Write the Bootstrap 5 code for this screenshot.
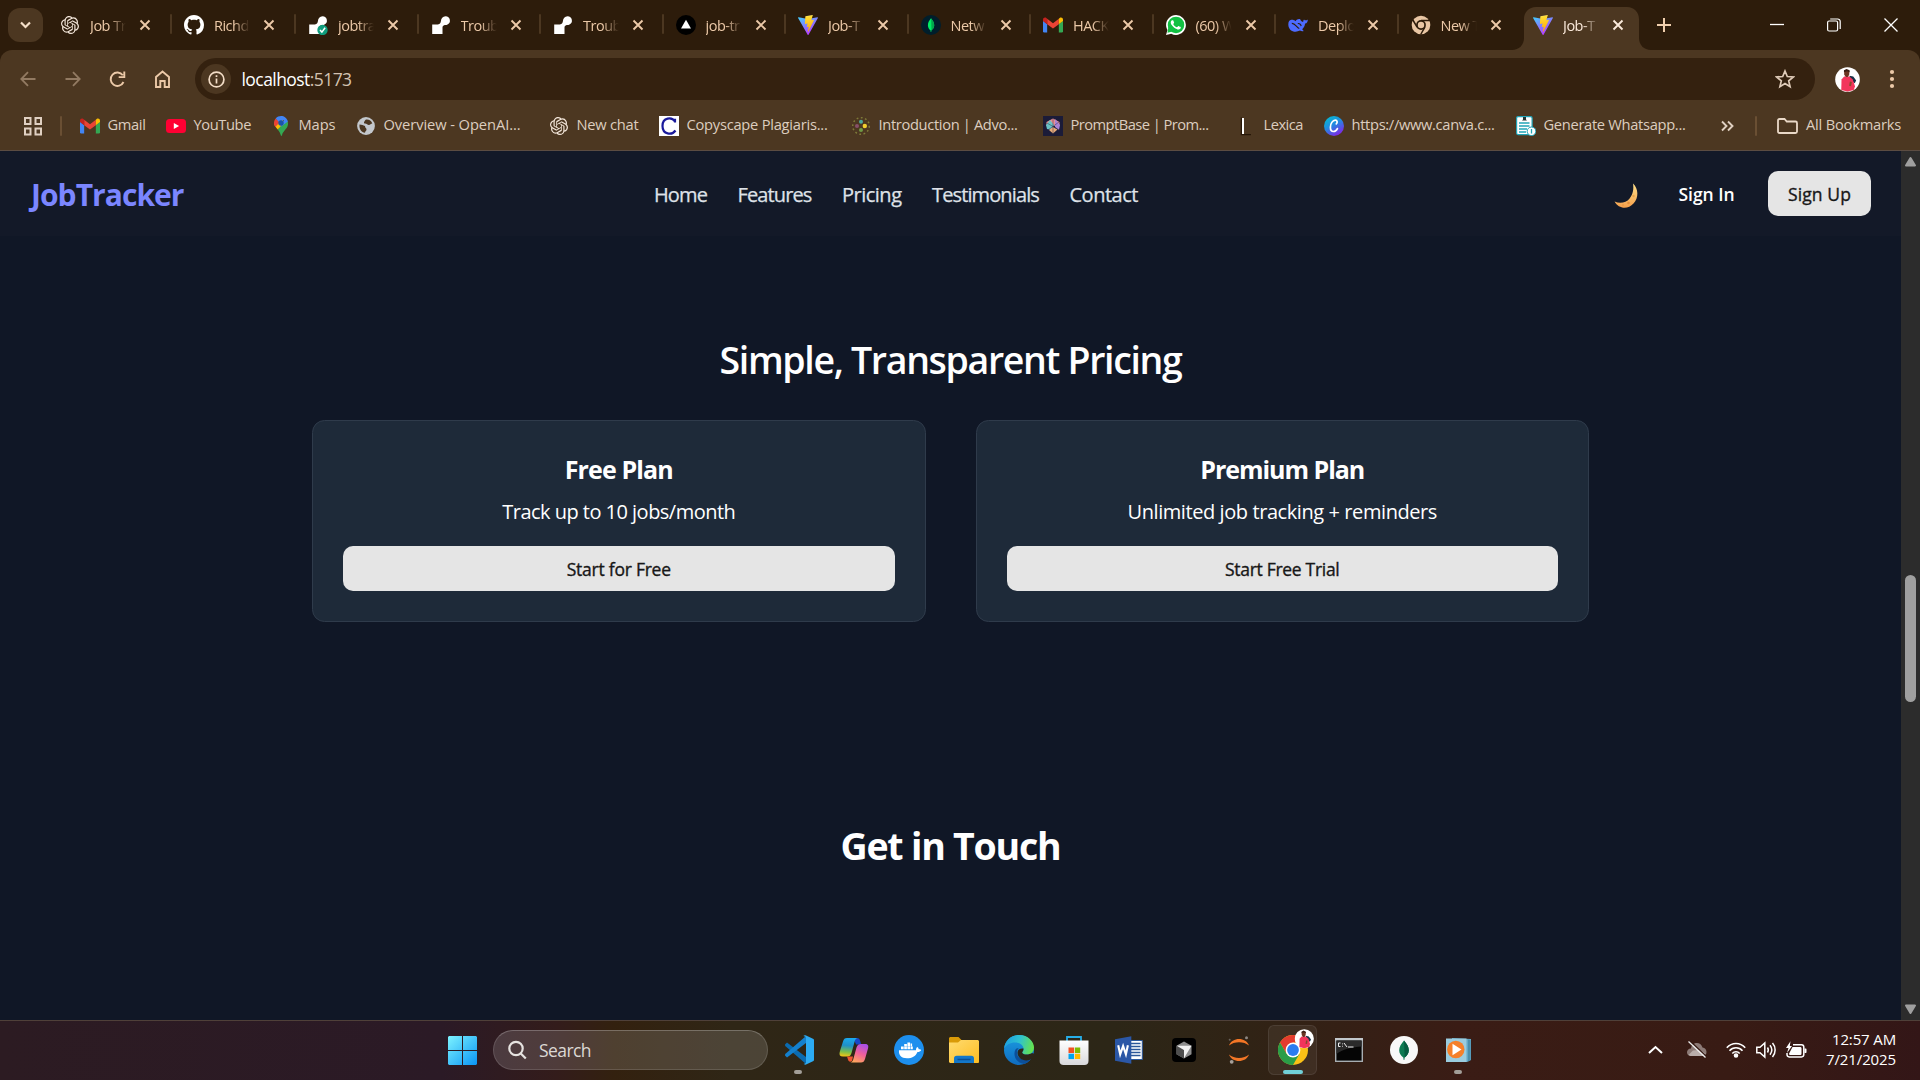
<!DOCTYPE html>
<html lang="en" data-bs-theme="dark">
<head>
<meta charset="utf-8">
<meta name="viewport" content="width=device-width, initial-scale=1">
<title>Job-Tracker</title>
<link rel="stylesheet" href="https://cdn.jsdelivr.net/npm/bootstrap@5.3.0/dist/css/bootstrap.min.css">
<style>
body{width:1920px;height:1080px;overflow:hidden;background:#101726;font-family:"Open Sans","Noto Sans",sans-serif;color:#fff}
svg{display:block;flex:none}
[data-w]{white-space:nowrap;display:inline-block}
/* tab strip */
.tabstrip{height:50px;background:#2d1c0b;color:#ecc9a8;font-size:14.5px}
.tabsearch{width:35px;height:34px;margin:8px 5px 0 8px;border-radius:12px;background:#4c3721}
.tab-item{position:relative;width:122.5px;height:50px;padding-left:12px;flex:none}
.tab-item.wide{width:124px}
.tab-item .fav{width:20px;height:20px;margin-right:10px}
.tab-item .cap{width:39px;white-space:nowrap;letter-spacing:-.5px;padding-top:1px;-webkit-mask-image:linear-gradient(90deg,#000 50%,transparent 92%)}
.tab-item .shut{margin-left:10px}
.tab-item::after{content:"";position:absolute;right:0;top:14px;width:2px;height:20px;background:#4c3721;border-radius:1px}
.tab-item:nth-child(n+13)::after{display:none}
.tab-item.current{color:#fbeadb}
.tab-item.current>*{position:relative}
.tab-item.current .tabshape{position:absolute;left:-9px;top:7px}
.plus{margin-left:13px}
.wctl{width:57px}
.tabbar-end{margin-right:1px}
/* toolbar */
.toolwrap{background:#2d1c0b}
.toolbar{height:58px;background:#4c3721;border-radius:12px 12px 0 0;padding-left:9px}
.tool{width:37px}
.tool+.tool{margin-left:8px}
.omni{width:1620px;height:42px;border-radius:21px;background:#34210f;margin-left:14px;padding-left:6px;font-size:17.5px}
.omni .star{margin-right:20px}
.site{width:30px;height:30px;background:#4c3721}
.host{margin-left:10.5px}
.port{color:#d3c2b1}
.me{margin-left:20px}
.dots{margin-left:29px}
/* bookmarks */
.marks{height:43px;background:#4c3721;border-bottom:1px solid #5b4c42;font-size:14.7px;color:#dccdbf}
.bm{flex:none;height:20px}
.bm svg{margin-right:8px}
.bm span{margin-top:-3px;margin-left:-.5px}
.divi{width:2px;height:20px;background:#6a4f33;border-radius:1px;margin:8px 18px 0}
.divi.last{margin:8px 20px 0 21px}
.w1{width:86px}.w2{width:105px}.w3{width:85px}.w4{width:193px}.w5{width:110px}.w6{width:192px}.w7{width:88px}.w8{width:205px}
/* page */
.viewport{height:869px}
.site-head{height:85px;background:#131928;padding:0 30px}
.brandname{font-size:30px;font-weight:700;color:#7b86ff;width:624px;line-height:1;padding-top:2px;padding-left:1px}
.links{font-size:20px;gap:30.5px;color:#dfe2e8;padding-top:2px;-webkit-text-stroke:.25px currentColor}
.links a{color:inherit;text-decoration:none}
.signin{font-size:17.5px;margin-left:31px;margin-right:33.5px;padding-top:1.5px}
.solid{--bs-btn-color:#171717;--bs-btn-hover-bg:#d6d6d6;--bs-btn-border-width:0;height:45px;border-radius:10px;font-size:17.5px;padding:1.5px 0 0;background:#e5e5e5;-webkit-text-stroke:.35px #171717}
.signup{width:103px}
.pricing{padding-top:98.5px}
.headline{font-size:37.5px;font-weight:600;line-height:50px}
.contact{margin-top:199px}
.plans{width:1277px;gap:50px;margin-top:35.5px}
.plan{flex:1;height:202px;border:1px solid #2f3b4b;border-radius:12.5px;background:#1e2a39;padding:31px 30px 29px}
.plan h3{font-size:25px;font-weight:700;line-height:35px;margin:0 0 10px}
.plan p{font-size:20px;line-height:30px;margin:0 0 19px}
/* scrollbar */
.sbar{width:19px;background:#2c2c2c;padding:5px 0 5px}
.thumb{width:11px;height:127px;border-radius:6px;background:#9f9f9f;margin-top:408px}
/* taskbar */
.taskbar{height:60px;border-top:1px solid #4f4039;background:linear-gradient(90deg,#2c1b22 0,#2b1a26 23%,#331c1b 29%,#33210f 32%,#2f2616 38%,#2c2617 58%,#302315 65%,#3a1c15 76%,#381b14 90%,#331617 100%);padding-bottom:1px}
.winstart{width:29px;margin-left:448px;margin-right:16px}
.findbox{width:275px;height:40px;border-radius:20px;border:1px solid rgba(255,255,255,.13);border-top-color:rgba(255,255,255,.24);background:rgba(255,255,255,.14);padding-left:14px;font-size:17.5px;color:#dcd8d4;margin-right:3px}
.app{position:relative;width:55px;height:60px;flex:none}
.app.run::after{content:"";position:absolute;bottom:6px;left:23px;width:8px;height:4px;border-radius:2px;background:#a29e98}
.app.active-app::before{content:"";position:absolute;left:2px;top:5px;width:49px;height:50px;border-radius:6px;background:rgba(255,255,255,.06);border:1px solid rgba(255,255,255,.08)}
.app.active-app::after{content:"";position:absolute;bottom:6px;left:17px;width:20px;height:4px;border-radius:2px;background:#71d0d8}
.app.active-app svg{position:relative;margin-top:-6px;margin-left:5px}
.tray{gap:10px}
.cloud{margin-left:13px;margin-right:8px}
.clock{font-size:15px;line-height:20px;width:105px;padding-right:24px;padding-bottom:3px}
</style>
<script src="https://cdn.jsdelivr.net/npm/bootstrap@5.3.0/dist/js/bootstrap.bundle.min.js"></script>
</head>
<body class="d-flex flex-column">
<svg width="0" height="0" class="position-absolute">
<defs>
<linearGradient id="va" x1="0" y1="0" x2=".6" y2="1"><stop offset="0" stop-color="#41d1ff"/><stop offset="1" stop-color="#bd34fe"/></linearGradient>
<linearGradient id="vb" x1=".4" y1="0" x2=".5" y2="1"><stop offset="0" stop-color="#ffea83"/><stop offset=".1" stop-color="#ffdd35"/><stop offset="1" stop-color="#ffa800"/></linearGradient>
<linearGradient id="wn" x1="0" y1="0" x2="1" y2="1"><stop offset="0" stop-color="#7df3ff"/><stop offset="1" stop-color="#0a94f5"/></linearGradient>
<linearGradient id="cv" x1="0" y1="0" x2=".6" y2="1"><stop offset="0" stop-color="#00c4cc"/><stop offset=".5" stop-color="#1e8ee0"/><stop offset="1" stop-color="#7d2ae8"/></linearGradient>
<linearGradient id="mo" x1="0" y1="0" x2="0" y2="1"><stop offset="0" stop-color="#ffe08a"/><stop offset="1" stop-color="#f5a04c"/></linearGradient>
<linearGradient id="ca" x1=".4" y1="0" x2=".3" y2="1"><stop offset="0" stop-color="#1ba9ee"/><stop offset=".4" stop-color="#1f90c9"/><stop offset=".75" stop-color="#7cc04a"/><stop offset="1" stop-color="#f5c513"/></linearGradient>
<linearGradient id="cb" x1=".7" y1="0" x2=".3" y2="1"><stop offset="0" stop-color="#a94fe8"/><stop offset=".5" stop-color="#f0609a"/><stop offset="1" stop-color="#ffa65c"/></linearGradient>
<linearGradient id="fo" x1="0" y1="0" x2="1" y2="1"><stop offset="0" stop-color="#ffdb70"/><stop offset="1" stop-color="#fdbd22"/></linearGradient>
<linearGradient id="ea" x1="0" y1=".3" x2="1" y2=".5"><stop offset="0" stop-color="#1b9de2"/><stop offset=".5" stop-color="#2fc2cf"/><stop offset="1" stop-color="#66e34c"/></linearGradient>
<linearGradient id="eb" x1="0" y1="0" x2="0" y2="1"><stop offset="0" stop-color="#1b9de2"/><stop offset="1" stop-color="#0f6cc0"/></linearGradient>
<linearGradient id="st" x1="0" y1="0" x2="0" y2="1"><stop offset="0" stop-color="#fff"/><stop offset="1" stop-color="#d9d9dc"/></linearGradient>
<symbol id="i-gpt" viewBox="0 0 24 24"><path fill="#f3e6da" d="M22.2819 9.8211a5.9847 5.9847 0 0 0-.5157-4.9108 6.0462 6.0462 0 0 0-6.5098-2.9A6.0651 6.0651 0 0 0 4.9807 4.1818a5.9847 5.9847 0 0 0-3.9977 2.9 6.0462 6.0462 0 0 0 .7427 7.0966 5.98 5.98 0 0 0 .511 4.9107 6.051 6.051 0 0 0 6.5146 2.9001A5.9847 5.9847 0 0 0 13.2599 24a6.0557 6.0557 0 0 0 5.7718-4.2058 5.9894 5.9894 0 0 0 3.9977-2.9001 6.0557 6.0557 0 0 0-.7475-7.0729zm-9.022 12.6081a4.4755 4.4755 0 0 1-2.8764-1.0408l.1419-.0804 4.7783-2.7582a.7948.7948 0 0 0 .3927-.6813v-6.7369l2.02 1.1686a.071.071 0 0 1 .038.052v5.5826a4.504 4.504 0 0 1-4.4945 4.4944zm-9.6607-4.1254a4.4708 4.4708 0 0 1-.5346-3.0137l.142.0852 4.783 2.7582a.7712.7712 0 0 0 .7806 0l5.8428-3.3685v2.3324a.0804.0804 0 0 1-.0332.0615L9.74 19.9502a4.4992 4.4992 0 0 1-6.1408-1.6464zM2.3408 7.8956a4.485 4.485 0 0 1 2.3655-1.9728V11.6a.7664.7664 0 0 0 .3879.6765l5.8144 3.3543-2.0201 1.1685a.0757.0757 0 0 1-.071 0l-4.8303-2.7865A4.504 4.504 0 0 1 2.3408 7.872zm16.5963 3.8558L13.1038 8.364 15.1192 7.2a.0757.0757 0 0 1 .071 0l4.8303 2.7913a4.4944 4.4944 0 0 1-.6765 8.1042v-5.6772a.79.79 0 0 0-.407-.667zm2.0107-3.0231l-.142-.0852-4.7735-2.7818a.7759.7759 0 0 0-.7854 0L9.409 9.2297V6.8974a.0662.0662 0 0 1 .0284-.0615l4.8303-2.7866a4.4992 4.4992 0 0 1 6.6802 4.66zM8.3065 12.863l-2.02-1.1638a.0804.0804 0 0 1-.038-.0567V6.0742a4.4992 4.4992 0 0 1 7.3757-3.4537l-.142.0805L8.704 5.459a.7948.7948 0 0 0-.3927.6813zm1.0976-2.3654l2.602-1.4998 2.6069 1.4998v2.9994l-2.5974 1.4997-2.6067-1.4997Z"/></symbol>
<symbol id="i-git" viewBox="0 0 16 16"><path fill="#fff" d="M8 0C3.58 0 0 3.58 0 8c0 3.54 2.29 6.53 5.47 7.59.4.07.55-.17.55-.38 0-.19-.01-.82-.01-1.49-2.01.37-2.53-.49-2.69-.94-.09-.23-.48-.94-.82-1.13-.28-.15-.68-.52-.01-.53.63-.01 1.08.58 1.23.82.72 1.21 1.87.87 2.33.66.07-.52.28-.87.51-1.07-1.78-.2-3.64-.89-3.64-3.95 0-.87.31-1.59.82-2.15-.08-.2-.36-1.02.08-2.12 0 0 .67-.21 2.2.82.64-.18 1.32-.27 2-.27.68 0 1.36.09 2 .27 1.53-1.04 2.2-.82 2.2-.82.44 1.1.16 1.92.08 2.12.51.56.82 1.27.82 2.15 0 3.07-1.87 3.75-3.65 3.95.29.25.54.73.54 1.48 0 1.07-.01 1.93-.01 2.2 0 .21.15.46.55.38A8.012 8.012 0 0 0 16 8c0-4.42-3.58-8-8-8z"/></symbol>
<symbol id="i-render" viewBox="0 0 20 20"><path fill="#fff" d="M14.5 1.200a4.400 4.400 0 0 1 1.600 8.500c-1 .5-2 .2-3 .5-1.300.4-1.600 1.500-1.600 2.800v6H1.200V9.600h3.800c2.600 0 4.600-.8 4.900-3.400.2-2.700 1.900-5 4.600-5z"/></symbol>
<symbol id="i-renderok" viewBox="0 0 20 20"><use href="#i-render"/><circle cx="14.500" cy="15" r="5.200" fill="#0f9d7d"/><path d="M12 15l1.900 2.100 3.200-4.300" stroke="#fff" stroke-width="1.500" fill="none"/></symbol>
<symbol id="i-vercel" viewBox="0 0 20 20"><circle cx="10" cy="10" r="10" fill="#000"/><path fill="#fff" d="M10 4.800l5 8.700H5z"/></symbol>
<symbol id="i-vite" viewBox="0 0 256 257"><path fill="url(#va)" d="M255.153 37.938L134.897 252.976c-2.483 4.44-8.862 4.466-11.382.048L.875 37.958c-2.746-4.814 1.371-10.646 6.827-9.67l120.385 21.517a6.537 6.537 0 0 0 2.322-.004l117.867-21.483c5.438-.991 9.574 4.796 6.877 9.62Z"/><path fill="url(#vb)" d="M185.432.063L96.44 17.501a3.268 3.268 0 0 0-2.634 3.014l-5.474 92.456a3.268 3.268 0 0 0 3.997 3.378l24.777-5.718c2.318-.535 4.413 1.507 3.936 3.838l-7.361 36.047c-.495 2.426 1.782 4.5 4.151 3.78l15.304-4.649c2.372-.72 4.652 1.36 4.15 3.788l-11.698 56.621c-.732 3.542 3.979 5.473 5.943 2.437l1.313-2.028l72.516-144.72c1.215-2.423-.88-5.186-3.54-4.672l-25.505 4.922c-2.396.462-4.435-1.77-3.759-4.114l16.646-57.705c.677-2.35-1.37-4.583-3.769-4.113Z"/></symbol>
<symbol id="i-mongo" viewBox="0 0 20 20"><circle cx="10" cy="10" r="10" fill="#001e2b"/><path fill="#00ed64" d="M10 3.200c1.800 2.200 3.200 4.200 3.200 7 0 2.300-1.100 3.900-2.700 5.100L10.200 17h-.5l-.2-1.700C8 14.200 6.900 12.500 6.900 10.200c0-2.700 1.300-4.800 3.100-7z"/><path fill="#00a84c" d="M10.100 3.200c1.700 2.200 3.100 4.200 3.100 7 0 2.300-1.100 3.900-2.700 5.100z"/></symbol>
<symbol id="i-gmail" viewBox="0 0 24 24"><g transform="translate(0 3)"><path fill="#4285f4" d="M0 4v12.500A1.500 1.500 0 0 0 1.500 18H5V8z"/><path fill="#34a853" d="M19 18h3.500a1.500 1.500 0 0 0 1.500-1.500V4l-5 4z"/><path fill="#ea4335" d="M5 8V1.500l7 5.300 7-5.300V8l-7 5.300z"/><path fill="#c5221f" d="M0 2.500V4.300L5 8V1.500L4 .700C2.300-.600 0 .500 0 2.500z"/><path fill="#fbbc04" d="M19 1.500V8l5-3.700V2.500c0-2-2.300-3.100-4-1.800z"/></g></symbol>
<symbol id="i-wa" viewBox="0 0 16 16"><path fill="#fff" d="M13.600 2.300A7.900 7.900 0 0 0 8 0C3.600 0 .070 3.600.060 7.900c0 1.400.4 2.800 1.100 4L0 16l4.200-1.100a7.900 7.900 0 0 0 3.800 1c4.400 0 7.900-3.600 7.900-7.900a7.900 7.900 0 0 0-2.300-5.700z"/><circle cx="8" cy="7.900" r="6.600" fill="#12c143"/><path fill="#12c143" d="M2 9l-.8 5.100L6 13z"/><path fill="#fff" d="M11.42 9.46c-.2-.1-1.17-.58-1.35-.64-.18-.07-.32-.1-.45.1-.13.2-.51.64-.63.77-.11.13-.23.15-.43.05-.2-.1-.84-.31-1.59-.98-.59-.52-.98-1.17-1.1-1.37-.11-.2-.01-.3.09-.4.09-.09.2-.23.3-.35.1-.11.13-.2.2-.33.06-.13.03-.25-.02-.35-.05-.1-.45-1.08-.61-1.47-.16-.39-.33-.34-.45-.34-.11-.01-.25-.01-.38-.01a.73.73 0 0 0-.53.25c-.18.2-.69.68-.69 1.65s.71 1.92.81 2.05c.1.13 1.4 2.13 3.39 2.99.47.2.84.33 1.13.42.48.15.91.13 1.25.08.38-.06 1.17-.48 1.34-.94.17-.46.17-.86.12-.94-.05-.08-.18-.13-.38-.23z"/></symbol>
<symbol id="i-deep" viewBox="0 0 20 20"><path fill="#4d6bfe" d="M12.200 4.200c.6 1.800 1.900 2.700 3.100 2.900-.3-1.200.1-1.900.8-2.700.4.700.9.900 1.600.9.800 0 1.400-.4 2.100-.9 0 2.200-.8 3.700-2.700 4.200-.3 2.400-1.300 4.300-2.900 5.700l1.500 1.700c-1.200.6-2.600.2-3.700-.4C6.500 18.300.4 15.800.3 9.400c0-2.800 1.200-4.400 3-4.600 1.900-.2 3 .5 4.600 1.400C8 5 9.600 3.800 12.200 4.200z"/><path fill="none" stroke="#2d1c0b" stroke-width="1.100" d="M3.800 8.400c3.300-.4 4.800 4.200 7.500 5.200M9.800 8.700c1.500-.6 3 .8 3.400 2.300"/></symbol>
<symbol id="i-chr" viewBox="0 0 20 20"><circle cx="10" cy="10" r="9.300" fill="#e9c6a4"/><path d="M10 5.500h8.500M6.100 12.200L1.900 5M13.900 12.200L9.700 19.500" stroke="#2d1c0b" stroke-width="1.500"/><circle cx="10" cy="10" r="4.900" fill="#2d1c0b"/><circle cx="10" cy="10" r="3.200" fill="#e9c6a4"/></symbol>
<symbol id="i-x" viewBox="0 0 12 12"><path d="M1.500 1.500l9 9M10.500 1.500l-9 9" stroke="currentColor" stroke-width="1.900" fill="none"/></symbol>
<symbol id="i-me" viewBox="0 0 26 26"><circle cx="13" cy="13" r="12.800" fill="#fff"/><path fill="#173047" d="M15 9L19 10 22 14 20.500 17 16 14z"/><path fill="#f2355b" d="M6.500 24L6.800 13 9.500 10H15L18.500 13 20.800 20 19.500 24 13 25.500z"/><path fill="#6b3422" d="M9.500 5L12 3l3 1.500L14.800 8l-1.500 2.500h-2L9.600 8z"/><path fill="#3a1d14" d="M9.300 5.500V3.500L12 2l3.200 1.500v2L12.500 4.300z"/><path fill="#8a4a2c" d="M15.500 15l2 .5-.8 4.500-2-.5z"/></symbol>
</defs>
</svg>

<header>
<div class="tabstrip d-flex align-items-start">
  <div class="tabsearch d-flex align-items-center justify-content-center"><svg width="11" height="8" viewBox="0 0 11 8"><path d="M1 1.500l4.500 4.500L10 1.500" stroke="#f5dfc8" stroke-width="2.200" fill="none"/></svg></div>
  <div class="tab-item wide d-flex align-items-center"><svg class="fav"><use href="#i-gpt" x="1" y="1" width="18" height="18"/></svg><span class="cap">Job Tr</span><svg class="shut" width="12" height="12"><use href="#i-x"/></svg></div>
  <div class="tab-item wide d-flex align-items-center"><svg class="fav"><use href="#i-git"/></svg><span class="cap">Richd</span><svg class="shut" width="12" height="12"><use href="#i-x"/></svg></div>
  <div class="tab-item d-flex align-items-center"><svg class="fav"><use href="#i-renderok"/></svg><span class="cap">jobtra</span><svg class="shut" width="12" height="12"><use href="#i-x"/></svg></div>
  <div class="tab-item d-flex align-items-center"><svg class="fav"><use href="#i-render"/></svg><span class="cap">Troub</span><svg class="shut" width="12" height="12"><use href="#i-x"/></svg></div>
  <div class="tab-item d-flex align-items-center"><svg class="fav"><use href="#i-render"/></svg><span class="cap">Troub</span><svg class="shut" width="12" height="12"><use href="#i-x"/></svg></div>
  <div class="tab-item d-flex align-items-center"><svg class="fav"><use href="#i-vercel"/></svg><span class="cap">job-tr</span><svg class="shut" width="12" height="12"><use href="#i-x"/></svg></div>
  <div class="tab-item d-flex align-items-center"><svg class="fav"><use href="#i-vite"/></svg><span class="cap">Job-T</span><svg class="shut" width="12" height="12"><use href="#i-x"/></svg></div>
  <div class="tab-item d-flex align-items-center"><svg class="fav"><use href="#i-mongo"/></svg><span class="cap">Netw</span><svg class="shut" width="12" height="12"><use href="#i-x"/></svg></div>
  <div class="tab-item d-flex align-items-center"><svg class="fav"><use href="#i-gmail"/></svg><span class="cap">HACK</span><svg class="shut" width="12" height="12"><use href="#i-x"/></svg></div>
  <div class="tab-item d-flex align-items-center"><svg class="fav"><use href="#i-wa"/></svg><span class="cap">(60) W</span><svg class="shut" width="12" height="12"><use href="#i-x"/></svg></div>
  <div class="tab-item d-flex align-items-center"><svg class="fav"><use href="#i-deep"/></svg><span class="cap">Deplo</span><svg class="shut" width="12" height="12"><use href="#i-x"/></svg></div>
  <div class="tab-item d-flex align-items-center"><svg class="fav"><use href="#i-chr"/></svg><span class="cap">New T</span><svg class="shut" width="12" height="12"><use href="#i-x"/></svg></div>
  <div class="tab-item current d-flex align-items-center"><svg class="tabshape" width="139" height="43" viewBox="0 0 139 43"><path fill="#4c3721" d="M0 43c7 0 12-5 12-12V12C12 5 17 0 24 0h91c7 0 12 5 12 12v19c0 7 5 12 12 12z"/></svg><svg class="fav"><use href="#i-vite"/></svg><span class="cap">Job-T</span><svg class="shut" width="12" height="12"><use href="#i-x"/></svg></div>
  <div class="d-flex align-items-center h-100 flex-grow-1">
    <svg width="14" height="14" viewBox="0 0 14 14" class="plus"><path d="M7 0v14M0 7h14" stroke="#f0cfae" stroke-width="2"/></svg>
    <div class="d-flex ms-auto tabbar-end text-white">
      <div class="wctl d-flex justify-content-center align-items-center"><svg width="14" height="14"><path d="M0 6.500h14" stroke="#fff" stroke-width="1.300"/></svg></div>
      <div class="wctl d-flex justify-content-center align-items-center"><svg width="14" height="14" fill="none" stroke="#fff" stroke-width="1.200"><rect x=".6" y="3" width="10" height="10" rx="1.500"/><path d="M3.200 1h7.500a2.500 2.500 0 0 1 2.500 2.500V11"/></svg></div>
      <div class="wctl d-flex justify-content-center align-items-center"><svg width="14" height="14"><path d="M.5.500l13 13M13.500.500l-13 13" stroke="#fff" stroke-width="1.300"/></svg></div>
    </div>
  </div>
</div>
<div class="toolwrap"><div class="toolbar d-flex align-items-center">
  <div class="tool d-flex justify-content-center"><svg width="16" height="16" fill="none" stroke="#927a62" stroke-width="1.800"><path d="M15.500 8H1.500M8 1.200L1.300 8 8 14.800"/></svg></div>
  <div class="tool d-flex justify-content-center"><svg width="16" height="16" fill="none" stroke="#927a62" stroke-width="1.800"><path d="M.5 8h14M8 1.200L14.700 8 8 14.800"/></svg></div>
  <div class="tool d-flex justify-content-center"><svg width="17" height="17" fill="none" stroke="#ecc9a8" stroke-width="1.900"><path d="M14.500 11A6.700 6.700 0 1 1 13.800 4.300M15.300.5v5.600H9.700"/></svg></div>
  <div class="tool d-flex justify-content-center"><svg width="17" height="18" fill="none" stroke="#ecc9a8" stroke-width="1.900"><path d="M2 17V7l6.500-5.500L15 7v10h-4.300v-6H6.300v6z"/></svg></div>
  <div class="omni d-flex align-items-center">
    <div class="site rounded-circle d-flex align-items-center justify-content-center"><svg width="17" height="17" fill="none" stroke="#f3ddc7" stroke-width="1.700"><circle cx="8.500" cy="8.500" r="7.400"/><path d="M8.500 7.500v5M8.500 4.300v1.800"/></svg></div>
    <span class="host" data-w="110">localhost<span class="port">:5173</span></span>
    <svg class="ms-auto star" width="20" height="20" viewBox="0 0 20 20"><path fill="none" stroke="#dfcbb8" stroke-width="1.700" d="M10 2l2.300 5.500 6 .5-4.600 3.900 1.400 5.800L10 14.600l-5.100 3.100 1.400-5.800L1.700 8l6-.5z"/></svg>
  </div>
  <svg class="me" width="25" height="25"><use href="#i-me"/></svg>
  <svg class="dots" width="6" height="22" fill="#ecc9a8"><circle cx="3" cy="4" r="2.100"/><circle cx="3" cy="11" r="2.100"/><circle cx="3" cy="18" r="2.100"/></svg>
</div></div>
<div class="marks d-flex">
  <svg class="mt-2 ms-4" width="18" height="20" fill="none" stroke="#e0d0c2" stroke-width="2"><path d="M1 2h5.500v6H1zM11.500 2H17v6h-5.500zM1 12.500h5.500v6H1zM11.500 12.500H17v6h-5.500z"/></svg>
  <div class="divi"></div>
  <div class="bm w1 mt-2 d-flex align-items-center"><svg width="20" height="20"><use href="#i-gmail"/></svg><span data-w="38">Gmail</span></div>
  <div class="bm w2 mt-2 d-flex align-items-center"><svg width="20" height="20"><rect y="3" width="20" height="14" rx="3.500" fill="#ff0033"/><path fill="#fff" d="M7.800 7v6l5.300-3z"/></svg><span data-w="57.500">YouTube</span></div>
  <div class="bm w3 mt-2 d-flex align-items-center"><svg width="20" height="20"><path fill="#34a853" d="M10 19.800c-.8-2.800-1.700-4.400-3.300-6.300L12 5l4.900.500c.8 4.800-1.300 6.500-3.500 9.300-1.300 1.600-2.300 3-2.400 5z"/><path fill="#fbbc04" d="M6.700 13.500C5 11.500 3.200 9.600 3 7l9-4-.2 5z"/><path fill="#ea4335" d="M3 7c0-2 .6-3.300 1.700-4.600L9 6 4.300 11C3.500 9.800 3 8.600 3 7z"/><path fill="#4285f4" d="M4.700 2.400C8.500-1.800 15.500-.300 16.900 5.500L9.500 11 13 4 8 6z"/><circle cx="10" cy="7" r="2.700" fill="#1b53a8"/></svg><span data-w="37">Maps</span></div>
  <div class="bm w4 mt-2 d-flex align-items-center"><svg width="20" height="20"><circle cx="10" cy="10" r="8.900" fill="#c3c7cc"/><path fill="#4c3721" d="M3.500 8.500c2.500 0 3.500 1 5.500 1.500 0 2 1.500 2 1.500 3.500s-1.500 1.500-1.500 3.300C5.500 16.500 3 13 3.500 8.500zM10 3.500c2.500-.5 5.500 1 6.300 4-1.500 0-2 1.500-3.500 1.500S11 7.500 9 7.500 8.300 5 10 3.500z"/></svg><span data-w="137">Overview - OpenAI...</span></div>
  <div class="bm w5 mt-2 d-flex align-items-center"><svg width="20" height="20"><use href="#i-gpt" x="1" y="1" width="18" height="18"/></svg><span data-w="62">New chat</span></div>
  <div class="bm w6 mt-2 d-flex align-items-center"><svg width="20" height="20"><rect width="20" height="20" fill="#fff"/><path fill="none" stroke="#1a1a9c" stroke-width="2.200" d="M16 6.500V2.800M16 5.500C13 .800 3.500 1.200 3.500 10S13 19.500 16.500 14.500"/></svg><span data-w="141">Copyscape Plagiaris...</span></div>
  <div class="bm w6 mt-2 d-flex align-items-center"><svg width="20" height="20"><circle cx="10" cy="10" r="8.300" fill="none" stroke="#8a8a3f" stroke-width="1.500" stroke-dasharray="1.800 2.500" opacity=".8"/><circle cx="10" cy="5.800" r="2" fill="#4ba99b"/><circle cx="10" cy="14" r="2" fill="#6f9a45"/><circle cx="6" cy="10" r="2" fill="#87506a"/><circle cx="13.800" cy="10" r="2.200" fill="#f1d02e"/></svg><span data-w="139">Introduction | Advo...</span></div>
  <div class="bm w4 mt-2 d-flex align-items-center"><svg width="20" height="20"><rect width="20" height="20" fill="#1b1b38"/><path fill="#e88f92" d="M10 2.500L16.500 6v4H3.500V6z"/><path fill="#69c2c6" d="M3 9l4-5 4 5-3 5-4-1z"/><path fill="#a884d6" d="M12 3l5 6-1 5-4-3z"/><path fill="#e6a978" d="M6 14l4-3 4.500 2.500L10 17.500z"/><path d="M4 7l12 7M16 6L5 14M10 3v14" stroke="#34304e" stroke-width=".5"/></svg><span data-w="138">PromptBase | Prom...</span></div>
  <div class="bm w7 mt-2 d-flex align-items-center"><svg width="20" height="20"><path fill="#fff" d="M6 2h2v16H6z"/><path fill="#261708" d="M4.800 1.500H6v16.500h9v1.300H4.800z"/></svg><span data-w="39.500">Lexica</span></div>
  <div class="bm w6 mt-2 d-flex align-items-center"><svg width="20" height="20"><circle cx="10" cy="10" r="10" fill="url(#cv)"/><path fill="none" stroke="#fff" stroke-width="1.700" stroke-linecap="round" d="M12.300 7.800c1.500-1.400.9-3.600-.9-3.600-2.900 0-5 3.500-5 7 0 2.800 1.200 4.300 3 4.300 1.700 0 3.200-1.200 4-2.900"/></svg><span data-w="143">https://www.canva.c...</span></div>
  <div class="bm w8 mt-2 d-flex align-items-center"><svg width="20" height="20"><rect x=".6" y=".6" width="15.500" height="18" rx="1.500" fill="#fff" stroke="#20a5b8" stroke-width="1.200"/><path fill="#233" d="M7 1h3v2.500l1 1H6l1-1z"/><path d="M3 7h10.500M3 10h10.500M3 13h8M3 16h7" stroke="#20a5b8" stroke-width="1.500"/><circle cx="15.500" cy="15.300" r="4.300" fill="#fff" stroke="#20a5b8"/><path d="M15.500 13v4.500" stroke="#20a5b8" stroke-width="1.300"/></svg><span data-w="142">Generate Whatsapp...</span></div>
  <svg class="mt-2" width="13" height="20" fill="none" stroke="#e0d0c2" stroke-width="1.900"><path d="M1 5.500l4.500 4.500L1 14.500M7 5.500l4.500 4.500L7 14.500"/></svg>
  <div class="divi last"></div>
  <div class="bm mt-2 d-flex align-items-center"><svg class="me-2" width="21" height="20" fill="none" stroke="#ead9c8" stroke-width="1.800"><path d="M1 4.500c0-1 .5-1.500 1.500-1.500h5l2.300 2.500h8.700c1 0 1.500.5 1.500 1.500v8.500c0 1-.5 1.500-1.500 1.500h-16c-1 0-1.500-.5-1.500-1.500z"/></svg><span class="ms-0 ps-0" data-w="95">All Bookmarks</span></div>
</div>
</header>

<div class="viewport d-flex">
  <main class="flex-grow-1">
    <nav class="site-head d-flex align-items-center">
      <div class="brandname"><span data-w="152.500">JobTracker</span></div>
      <div class="links d-flex align-items-center">
        <a href="#" data-w="53">Home</a><a href="#" data-w="74">Features</a><a href="#" data-w="59.500">Pricing</a><a href="#" data-w="107">Testimonials</a><a href="#" data-w="68.500">Contact</a>
      </div>
      <div class="d-flex align-items-center ms-auto">
        <svg width="26" height="28" viewBox="0 0 26 28" class="me-2 mt-1"><path fill="url(#mo)" d="M19 1.500c5.500 5 6 14.500.5 20C14 27.800 4.500 27 .6 19.500c5 2.500 11.500 1.500 15-3 3.500-4.300 4.300-9.800 3.400-15z"/><circle cx="19.500" cy="14" r="1.200" fill="#e9a548"/><circle cx="14.500" cy="21" r="1.300" fill="#e58f3c"/><circle cx="9" cy="23" r=".8" fill="#e58f3c"/></svg>
        <span class="fw-semibold signin" data-w="56">Sign In</span>
        <button class="btn solid signup"><span data-w="63">Sign Up</span></button>
      </div>
    </nav>
    <section class="pricing d-flex flex-column align-items-center">
      <h2 class="headline mb-0"><span data-w="462">Simple, Transparent Pricing</span></h2>
      <div class="plans d-flex">
        <div class="plan text-center"><h3><span data-w="108">Free Plan</span></h3><p><span data-w="233">Track up to 10 jobs/month</span></p><button class="btn solid w-100"><span data-w="104">Start for Free</span></button></div>
        <div class="plan text-center"><h3><span data-w="164">Premium Plan</span></h3><p><span data-w="309.500">Unlimited job tracking + reminders</span></p><button class="btn solid w-100"><span data-w="114.500">Start Free Trial</span></button></div>
      </div>
      <h2 class="headline contact mb-0 fw-bold"><span data-w="220">Get in Touch</span></h2>
    </section>
  </main>
  <div class="sbar d-flex flex-column align-items-center">
    <svg width="13" height="11"><path d="M6.500 2L11 9.500H2z" fill="#9f9f9f" stroke="#9f9f9f" stroke-width="2" stroke-linejoin="round"/></svg>
    <div class="thumb"></div>
    <svg class="mt-auto" width="13" height="11"><path d="M6.500 9L11 1.500H2z" fill="#9f9f9f" stroke="#9f9f9f" stroke-width="2" stroke-linejoin="round"/></svg>
  </div>
</div>

<footer class="taskbar d-flex align-items-center">
  <svg class="winstart" width="29" height="29" viewBox="0 0 29 29"><path fill="url(#wn)" d="M1 0h13v14H0V1zM15 0h13l1 1v13H15zM0 15h14v14H1l-1-1zM15 15h14v13l-1 1H15z"/></svg>
  <div class="findbox d-flex align-items-center"><svg width="19" height="20" class="me-2" fill="none" stroke="#e6e3e0" stroke-width="2.200"><circle cx="8" cy="8.500" r="6.700"/><path d="M12.800 13.500l5 5"/></svg><span class="ms-1" data-w="52">Search</span></div>
  <div class="app run d-flex align-items-center justify-content-center"><svg width="30" height="30" viewBox="0 0 30 30"><path fill="#0b6bb0" d="M1 9.500l2-2 19 14.500v7L1.200 11z"/><path fill="#1480cd" d="M1 20.500l2 2L22 8V1L1.200 19z"/><path fill="#2cabf3" d="M21.500.3L29 3.800c.7.3 1 .8 1 1.500v19.400c0 .7-.3 1.200-1 1.500l-7.500 3.500c-1 0-2-.7-2-.7l2.500-1V2l-2.500-1s1-.7 2-.7z"/></svg></div>
  <div class="app d-flex align-items-center justify-content-center"><svg width="30" height="28" viewBox="0 0 30 28"><path fill="#1747c8" d="M14 2h4c2 0 2.600 1 3.200 3l1 3.500h-5z"/><path fill="url(#ca)" d="M8 2h10.500c-1.800.5-2.500 2-3 4l-3 11c-.8 2.500-1.800 3.500-4 3.500H4c-3 0-4-1.500-3.300-4.500L4 5.500C4.700 3 5.800 2 8 2z"/><path fill="#ee5630" d="M8 20.500h6l-1 4.500c-2 1.500-3.500.5-4-1.500z"/><path fill="url(#cb)" d="M22 8h4c3 0 3.800 1.500 3 4.500L26 23c-.7 2.500-1.800 3.500-4 3.500H11.500c1.800-.5 2.500-2 3-4l3-11C18.300 9 19.800 8 22 8z"/></svg></div>
  <div class="app d-flex align-items-center justify-content-center"><svg width="30" height="30" viewBox="0 0 30 30"><circle cx="15" cy="15" r="15" fill="#1d8fee"/><path fill="#fff" d="M5 15.200h17c0-1.500.3-2.500 1.500-3.200.8.600 1.200 1.500 1.200 2.300 1 0 1.800.1 2.500.6-.7 1.500-2 2-3.700 2-2 4.500-5.500 6.300-10.500 6.300-6 0-8.500-3.500-8-8z"/><path fill="#fff" d="M7 11.600h2.700v2.700H7zM10.200 11.600h2.700v2.700h-2.700zM13.400 11.600h2.700v2.700h-2.700zM16.600 11.600h2.200v2.700h-2.200zM10.200 9h2.700v2.200h-2.700zM13.400 7.500h2.700v3.700h-2.700zM16.600 8.500h1.500v2.700h-1.500z"/></svg></div>
  <div class="app d-flex align-items-center justify-content-center"><svg width="30" height="27" viewBox="0 0 30 27"><path fill="#d99a08" d="M1 0h8.500l3 3H20v8H0V1z"/><path fill="url(#fo)" d="M0 5.500h9L12 3h17l1 1v21.500L29 26H1l-1-1z"/><path fill="#1377c9" d="M5 26v-4.500c0-1.800.9-2.800 2.700-2.800h14.600c1.800 0 2.700 1 2.700 2.800V26z"/><path d="M8.500 22.500h13" stroke="#0a4f94" stroke-width="1.500"/></svg></div>
  <div class="app d-flex align-items-center justify-content-center"><svg width="30" height="30" viewBox="0 0 30 30"><circle cx="15" cy="15" r="15" fill="url(#eb)"/><path fill="url(#ea)" d="M0 13.500C1 5.500 7 0 15 0c9 0 15 6.500 15 12.500 0 4.500-3.500 7-7 7-4 0-5-1.500-4.800-2.300.3-.8 1.500-1.700 1.300-4C19 9.500 15 7.500 11 7.500c-5 0-8.500 2.300-11 6z"/><path fill="#0c4f99" d="M11.500 14.500c-3 5.500.5 13.500 8.500 14.500 2.500-.6 5.500-2.600 7.500-5.500-6 3-15 1-14.500-6.500.1-1.800.7-2.900 1.700-3.500-1.300-.3-2.300-.1-3.200 1z"/><path fill="#2d2618" d="M19.500 13.500c.2 2-1 3-1.300 3.800-.3 2.200 6.300 3.200 9.800.700l2.500 1-2.500 5c-7 3.500-14.500 0-14.500-6.500 0-3 3-4.500 6-4z"/></svg></div>
  <div class="app d-flex align-items-center justify-content-center"><svg width="30" height="30" viewBox="0 0 30 30"><path fill="none" stroke="#27aee8" stroke-width="1.800" d="M8 6V2h14v4"/><path fill="url(#st)" d="M.5 5.500h29V26c0 2.500-1.500 4-4 4h-21c-2.500 0-4-1.500-4-4z"/><path fill="#f25022" d="M9.500 12.500H15V18H9.500z"/><path fill="#7fba00" d="M15.800 12.500h5.400V18h-5.400z"/><path fill="#00a4ef" d="M9.500 18.700H15v5.400H9.500z"/><path fill="#ffb900" d="M15.800 18.700h5.400v5.400h-5.400z"/></svg></div>
  <div class="app d-flex align-items-center justify-content-center"><svg width="28" height="28" viewBox="0 0 28 28"><path fill="#fff" stroke="#2b579a" d="M14 4.500h13.300v19H14z"/><path d="M16 7.500h9.500M16 10.500h9.500M16 13.500h9.500M16 16.500h9.500M16 19.500h9.500" stroke="#2b579a" stroke-width="1.300"/><path fill="#2b57a6" d="M0 3.300L16.300.3v27.400L0 24.700z"/><path fill="none" stroke="#fff" stroke-width="2.100" d="M3.200 9.300l2 9L8.100 10l2.800 8.300 2-9"/></svg></div>
  <div class="app d-flex align-items-center justify-content-center"><svg width="24" height="24" viewBox="0 0 24 24"><rect width="24" height="24" rx="4" fill="#000"/><path fill="#8d8d8d" d="M12 3.500l7.500 4.200v8.600L12 20.500l-7.500-4.200V7.700z"/><path fill="#4e4e4e" d="M4.500 7.700L12 12v8.500l-7.500-4.200z"/><path fill="#f2f2f2" d="M5 7.700h14.500L12 20.300V12z"/></svg></div>
  <div class="app d-flex align-items-center justify-content-center"><svg width="22" height="28" viewBox="0 0 22 28"><path fill="#f37626" d="M1 9.500C4 .8 18 .8 21 9.500 16 5 6 5 1 9.500zM1 18.500C4 27.200 18 27.200 21 18.500 16 23 6 23 1 18.500z"/><circle cx="18.500" cy="1.800" r="1.500" fill="#8d8681"/><circle cx="3.700" cy="25.800" r="1.900" fill="#a7a19b"/><circle cx="1.700" cy="3.700" r="1" fill="#6b645e"/></svg></div>
  <div class="app active-app d-flex align-items-center justify-content-center"><svg width="36" height="38" viewBox="0 0 36 38"><circle cx="15" cy="22" r="15" fill="#fbc116"/><path fill="#e33b2e" d="M2 14.500A15 15 0 0 1 28 14.500H15l-6.500 11.300z"/><path fill="#2a9d48" d="M2 14.500A15 15 0 0 0 15 37l6.500-11.300h-13z"/><circle cx="15" cy="22" r="7.400" fill="#fff"/><circle cx="15" cy="22" r="5.900" fill="#2c7cf0"/><use href="#i-me" x="16.500" y="1" width="19.500" height="19.500"/></svg></div>
  <div class="app d-flex align-items-center justify-content-center"><svg width="28" height="24" viewBox="0 0 28 24"><rect x=".7" y=".7" width="26.600" height="22.600" fill="#050505" stroke="#a8aeb2" stroke-width="1.400"/><path fill="#c2c8cc" d="M0 0h28v2.500H0z"/><path fill="#2a2a2a" d="M1.500 2.500h25v6C18 9 8 11 1.500 16z"/><path d="M3.500 5v3.500M3.500 5h2M3.500 8.500h2M7.500 5.500v.8M7.500 7.800v.8M9 5l3 4M13 9h5.500" stroke="#eee" fill="none"/></svg></div>
  <div class="app d-flex align-items-center justify-content-center"><svg width="28" height="28" viewBox="0 0 28 28"><circle cx="14" cy="14" r="14" fill="#f8f8f8"/><path fill="#0d7a52" d="M14 4.500c2.800 3.300 4.800 6 4.800 9.800 0 3.100-1.600 5.300-4.100 7.200L14.300 24h-.6l-.4-2.500c-2.500-1.900-4.100-4.100-4.100-7.200 0-3.800 2-6.500 4.800-9.800z"/><path fill="#065c40" d="M14 4.500c2.800 3.300 4.800 6 4.800 9.800 0 3.100-1.600 5.300-4.100 7.200z"/></svg></div>
  <div class="app run d-flex align-items-center justify-content-center"><svg width="26" height="26" viewBox="0 0 26 26"><path fill="#62a8c6" d="M6 1l19 1v21l-4 2H6z"/><path fill="#4a8eac" d="M22 2.500l2.500.500v20l-2.500 1.500z"/><path fill="#9accdf" d="M0 1.500h20.500V25H0z"/><circle cx="9.800" cy="12.500" r="8.700" fill="#f5802a"/><path fill="#fff" d="M6.500 6.800v11.400l9-5.700z"/></svg></div>
  <div class="tray d-flex align-items-center ms-auto">
    <svg width="15" height="10" fill="none" stroke="#fff" stroke-width="2"><path d="M1 8l6.500-6L14 8"/></svg>
    <svg width="22" height="18" viewBox="0 0 22 18" class="cloud"><path fill="#8c7a76" d="M4.500 15C-.500 14.500 0 7.500 5 7.500 6 1 14.500 0 16.500 6.500c5 .3 5.500 8 .5 8.500z"/><path fill="#b9adaa" d="M2.500 14l4.500-4.500 7-.5 5.500 3.500c-.5 1.500-1.500 2.500-3 2.500h-12z"/><path d="M3.500-.500L20.500 15.500" stroke="#351a14" stroke-width="1.300"/><path d="M2.500.500L19.500 16.500" stroke="#eee" stroke-width="1.300"/></svg>
    <svg width="20" height="16" viewBox="0 0 20 16" fill="none" stroke="#fff" stroke-width="1.600"><path d="M.8 5.800c5-5.800 13.400-5.800 18.400 0M3.500 8.700c3.500-4 9.500-4 13 0M6.300 11.400c2-2.300 5.400-2.300 7.400 0"/><circle cx="10" cy="13.500" r="1.500" fill="#fff"/></svg>
    <svg width="20" height="18" viewBox="0 0 20 18" fill="none" stroke="#fff" stroke-width="1.500"><path d="M.8 6.300H4L8.800 2v14L4 11.700H.8zM11.500 6.500c1 1.500 1 3.500 0 5M14 4.300c2.200 2.800 2.200 6.600 0 9.400M16.500 2c3.500 4 3.500 10 0 14"/></svg>
    <svg width="21" height="18" viewBox="0 0 21 18"><path fill="none" stroke="#fff" stroke-width="1.500" d="M7 3.800h8.500c1.500 0 2.300.8 2.300 2.300v7.500c0 1.500-.8 2.300-2.300 2.300H3.200c-1.400 0-2.200-.8-2.200-2.300V12"/><path fill="#fff" d="M6.500 6H14c1 0 1.500.5 1.500 1.500v5c0 1-.5 1.500-1.500 1.500H4c-.7 0-1-.5-1-1.200zM18.500 7.500h1.200c.6 0 .8.300.8.800v3c0 .5-.2.800-.8.800h-1.200zM4.500.3L0 7h2.500L1 12l5-7H3.800z"/></svg>
  </div>
  <div class="clock ms-2 text-end d-flex flex-column align-items-end"><span data-w="64">12:57 AM</span><span data-w="70">7/21/2025</span></div>
</footer>
<script>
document.querySelectorAll('[data-w]').forEach(function (el) {
  var want = parseFloat(el.dataset.w), have = el.getBoundingClientRect().width;
  el.style.letterSpacing = ((want - have) / el.textContent.length).toFixed(3) + 'px';
});
</script>
</body>
</html>
